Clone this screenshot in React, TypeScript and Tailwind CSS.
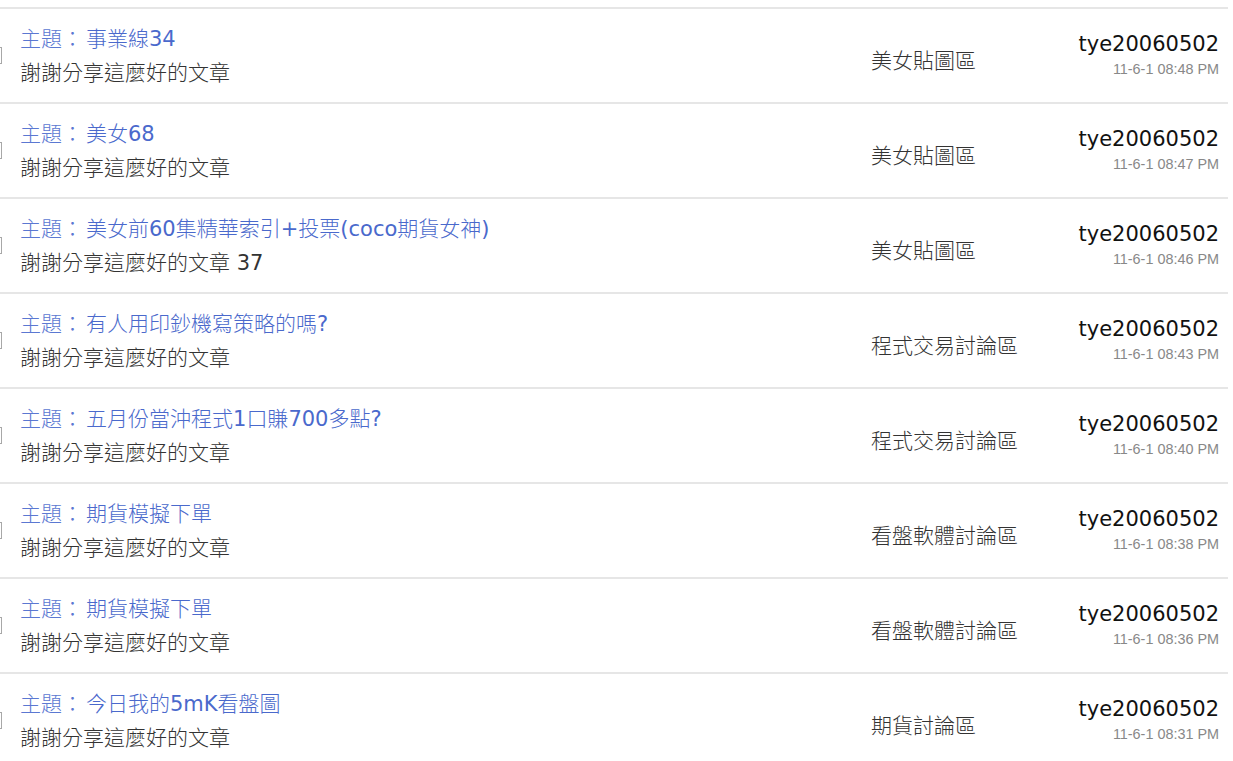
const posts = [
  { title: '事業線34', note: '謝謝分享這麼好的文章', board: '美女貼圖區', time: '11-6-1 08:48 PM' },
  { title: '美女68', note: '謝謝分享這麼好的文章', board: '美女貼圖區', time: '11-6-1 08:47 PM' },
  { title: '美女前60集精華索引+投票(coco期貨女神)', note: '謝謝分享這麼好的文章 37', board: '美女貼圖區', time: '11-6-1 08:46 PM' },
  { title: '有人用印鈔機寫策略的嗎?', note: '謝謝分享這麼好的文章', board: '程式交易討論區', time: '11-6-1 08:43 PM' },
  { title: '五月份當沖程式1口賺700多點?', note: '謝謝分享這麼好的文章', board: '程式交易討論區', time: '11-6-1 08:40 PM' },
  { title: '期貨模擬下單', note: '謝謝分享這麼好的文章', board: '看盤軟體討論區', time: '11-6-1 08:38 PM' },
  { title: '期貨模擬下單', note: '謝謝分享這麼好的文章', board: '看盤軟體討論區', time: '11-6-1 08:36 PM' },
  { title: '今日我的5mK看盤圖', note: '謝謝分享這麼好的文章', board: '期貨討論區', time: '11-6-1 08:31 PM' },
];

const cjk = { fontFamily: '"DejaVu Sans", "Noto Sans CJK TC", sans-serif' };

// latin runs render at normal weight, CJK stays light
function Mixed({ text }: { text: string }) {
  const parts = text.split(/([A-Za-z0-9+()?]+)/);
  return (
    <>
      {parts.map((s, i) =>
        /^[A-Za-z0-9+()?]+$/.test(s) ? (
          <span key={i} className="font-normal">{s}</span>
        ) : (
          <span key={i}>{s}</span>
        )
      )}
    </>
  );
}

export default function App() {
  return (
    <div className="w-[1233px] h-[761px] overflow-hidden bg-white pt-[7px] pr-[5px]">
      {posts.map((p, idx) => (
        <div key={idx} className="flex items-center h-[95px] border-t-2 border-[#e6e6e6]">
          <div className="shrink-0 w-[16px] h-[17px] -ml-[14px] border border-[#a8a8a8] bg-white" />
          <div className="flex-1 min-w-0 ml-[18px] flex flex-col text-[21px] font-light" style={cjk}>
            <div className="leading-[34px] text-[#4a69cc] whitespace-nowrap">
              <span className="text-[#5b78d2]">主題：</span>
              <span className="ml-[3px]"><Mixed text={p.title} /></span>
            </div>
            <div className="leading-[34px] text-[#333] whitespace-nowrap">
              <Mixed text={p.note} />
            </div>
          </div>
          <div className="w-[167px] shrink-0 mt-[10px] text-[21px] leading-[30px] text-[#333] font-light whitespace-nowrap" style={cjk}>
            {p.board}
          </div>
          <div className="w-[190px] shrink-0 pr-[9px] flex flex-col items-end gap-[6px]">
            <div className="text-[21px] leading-[20px] text-[#111]" style={{ fontFamily: '"DejaVu Sans", sans-serif' }}>
              tye20060502
            </div>
            <div className="text-[14.4px] leading-[18px] text-[#888]" style={{ fontFamily: '"Liberation Sans", Arial, sans-serif' }}>
              {p.time}
            </div>
          </div>
        </div>
      ))}
    </div>
  );
}
